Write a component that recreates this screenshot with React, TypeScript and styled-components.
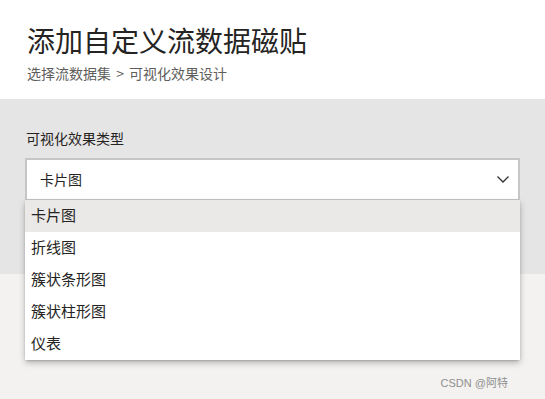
import React from "react";
import styled, { createGlobalStyle } from "styled-components";

const Global = createGlobalStyle`
  html, body { margin: 0; padding: 0; }
  body {
    background: #f3f2f1;
    font-family: "Noto Sans CJK SC", "Liberation Sans", sans-serif;
    color: #252423;
  }
`;

const Page = styled.div`
  width: 545px;
  height: 399px;
  position: relative;
  overflow: hidden;
  background: #f3f2f1;
  display: flex;
  flex-direction: column;
`;

const Header = styled.div`
  background: #ffffff;
  height: 99px;
  box-sizing: border-box;
  padding: 21px 0 0 27px;
`;

const Title = styled.h1`
  margin: 0;
  font-size: 28px;
  font-weight: 400;
  line-height: 38px;
  color: #252423;
  font-family: "Noto Sans CJK SC", sans-serif;
`;

const Crumb = styled.div`
  margin-top: 4px;
  font-size: 14px;
  line-height: 20px;
  color: #605e5c;
  font-family: "Noto Sans CJK SC", sans-serif;
  word-spacing: 2px;
`;

const Section = styled.div`
  background: #e5e5e5;
  height: 175px;
  box-sizing: border-box;
  padding: 29px 25px 0 25px;
  position: relative;
`;

const Label = styled.div`
  font-size: 14px;
  line-height: 20px;
  padding-left: 1px;
  color: #252423;
  font-family: "Noto Sans CJK SC", sans-serif;
`;

const SelectWrap = styled.div`
  margin-top: 10px;
  position: relative;
  width: 495px;
`;

const SelectBox = styled.div`
  box-sizing: border-box;
  height: 42px;
  background: #ffffff;
  border: 2px solid #c8c6c4;
  border-bottom-width: 1px;
  display: flex;
  align-items: center;
  justify-content: space-between;
  padding: 0 8px 2px 13px;
  font-size: 14px;
  color: #252423;
  font-family: "Noto Sans CJK SC", sans-serif;
`;

const Menu = styled.ul`
  position: absolute;
  top: 42px;
  left: 0;
  width: 495px;
  margin: 0;
  padding: 0;
  list-style: none;
  background: #ffffff;
  border-radius: 0 0 3px 3px;
  box-shadow: 0 3px 6px rgba(0, 0, 0, 0.25), 0 1px 2px rgba(0, 0, 0, 0.15);
  z-index: 5;
`;

const Item = styled.li<{ $active?: boolean }>`
  box-sizing: border-box;
  height: 32px;
  display: flex;
  align-items: center;
  padding: 0 0 3px 6px;
  font-size: 15px;
  color: #252423;
  font-family: "Noto Sans CJK SC", sans-serif;
  background: ${(p) => (p.$active ? "#ebe9e7" : "#ffffff")};
`;

const Watermark = styled.div`
  position: absolute;
  right: 37px;
  bottom: 9px;
  font-size: 11px;
  color: #8f8f8f;
  font-family: "Liberation Sans", "Noto Sans CJK SC", sans-serif;
`;

const Chevron = () => (
  <svg width="14" height="14" viewBox="0 0 14 14" fill="none">
    <path d="M1.5 4.5 L7 10 L12.5 4.5" stroke="#323130" strokeWidth="1.3" />
  </svg>
);

const options = ["卡片图", "折线图", "簇状条形图", "簇状柱形图", "仪表"];

export default function App() {
  return (
    <Page>
      <Global />
      <Header>
        <Title>添加自定义流数据磁贴</Title>
        <Crumb>选择流数据集 &gt; 可视化效果设计</Crumb>
      </Header>
      <Section>
        <Label>可视化效果类型</Label>
        <SelectWrap>
          <SelectBox>
            <span>卡片图</span>
            <Chevron />
          </SelectBox>
          <Menu>
            {options.map((o, i) => (
              <Item key={o} $active={i === 0}>
                {o}
              </Item>
            ))}
          </Menu>
        </SelectWrap>
      </Section>
      <Watermark>CSDN @阿特</Watermark>
    </Page>
  );
}
